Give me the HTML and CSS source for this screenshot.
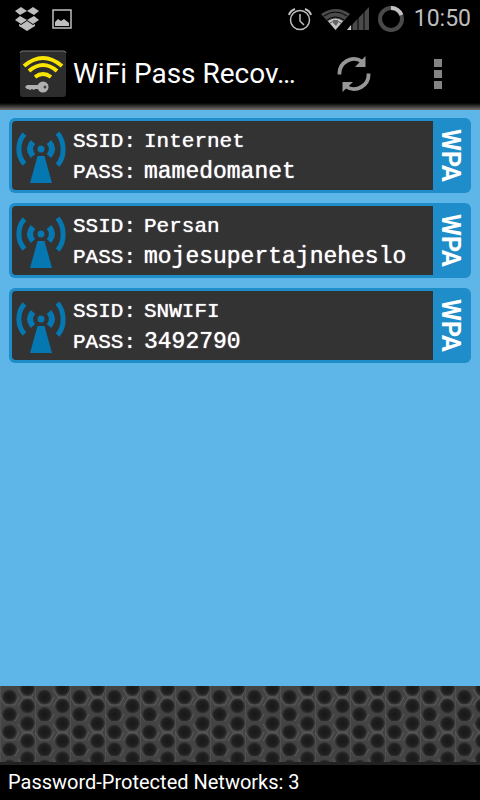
FILE: index.html
```html
<!DOCTYPE html>
<html lang="en">
<head>
<meta charset="utf-8">
<meta name="viewport" content="width=device-width, initial-scale=1">
<title>WiFi Pass Recovery</title>
<link rel="stylesheet" href="styles.css">
</head>
<body>
<svg class="defs" width="0" height="0" aria-hidden="true">
  <symbol id="antenna" viewBox="0 0 50 54">
    <circle cx="25" cy="19" r="3.500" fill="#0577b1"/>
    <path d="M21.500 26h7L36 53H14z" fill="#0577b1"/>
    <g fill="none" stroke="#0577b1">
      <path d="M17 12Q11 19 17 26M33 12Q39 19 33 26" stroke-width="6"/>
      <path d="M8.500 4C1 12 1 26 8.500 34M41.500 3C49 12 49 27 41.500 35" stroke-width="5"/>
    </g>
  </symbol>
</svg>

<div class="status">
  <svg width="26" height="24" viewBox="0 0 26 24" fill="#bebebe" aria-hidden="true">
    <path d="M7 0l6 4-7 4-5-4zM19 0l6 4-5 4-7-4zM6 9l7 4-6 4-6-4zM20 9l5 4-6 4-6-4zM13 14l6 4 2-1v2l-8 5-8-5v-2l2 1z"/>
  </svg>
  <svg width="20" height="20" viewBox="0 0 20 20" aria-hidden="true">
    <rect x="1" y="1" width="18" height="18" fill="none" stroke="#bebebe" stroke-width="1.500"/>
    <path d="M3 17v-4l3-3 3 2 3-2 5 4v3z" fill="#bebebe"/>
  </svg>
  <span class="spacer"></span>
  <svg width="24" height="24" viewBox="0 0 24 24" fill="none" stroke="#bebebe" aria-hidden="true">
    <circle cx="12" cy="13" r="9.500" stroke-width="1.500"/>
    <path d="M12 7v7l4 4" stroke-width="1.500"/>
    <path d="M1 8Q2 4 7 2M23 8Q22 4 17 2" stroke-width="2"/>
  </svg>
  <svg class="signal" width="49" height="24" viewBox="0 0 49 24" aria-hidden="true">
    <path d="M0 7Q15-3 29 7L14.500 23z" fill="#4a4a4a"/>
    <path d="M7 14Q14.500 9 22 14L14.500 23z" fill="#c4c4c4"/>
    <g fill="none" stroke="#000"><path d="M3 9Q14.500 1 26 9M6 13Q14.500 7 23 13"/><path d="M9 16Q14.500 12 20 16" stroke="#555"/></g>
    <path d="M12 13h5v3l-2 3-3-3z" fill="#666"/>
    <path d="M26 23L48 0v23z" fill="#4a4a4a"/>
    <path d="M26 23l4-5v5z" fill="#c4c4c4"/>
    <path d="M31 10v13M37 8v15M43 2v21" stroke="#000"/>
  </svg>
  <svg class="battery" width="26" height="26" viewBox="0 0 26 26" fill="none" stroke-width="4" aria-hidden="true">
    <circle cx="13" cy="13" r="11" stroke="#4a4a4a"/>
    <path d="M13 2A11 11 0 0 1 23.500 9" stroke="#c4c4c4"/>
  </svg>
  <time>10:50</time>
</div>

<header class="bar">
  <svg width="48" height="48" viewBox="0 0 48 48" aria-hidden="true">
    <rect x="1" y="1" width="46" height="46" rx="3" fill="#2d2d2d"/>
    <path d="M1 3q0-2 3-2h40q3 0 3 2" fill="none" stroke="#777" stroke-width="1"/>
    <g fill="none" stroke="#f8e500" stroke-width="4">
      <path d="M5 16Q24 0 43 16M10 21Q24 9 38 21M16 27Q24 21 32 27"/>
    </g>
    <circle cx="24" cy="37" r="5.500" fill="#b0b0b0"/><circle cx="26" cy="37" r="1.500" fill="#444"/>
    <path d="M19 35v4h-3l-1 1-2-1-2 1-2-1H8l-2-2 2-2z" fill="#b0b0b0"/>
  </svg>
  <h1>WiFi Pass Recov…</h1>
  <button type="button" class="refresh" aria-label="Refresh">
    <svg width="34" height="36" viewBox="0 0 34 36" aria-hidden="true">
      <g fill="none" stroke="#969696" stroke-width="3.800">
        <path d="M2.500 18.500A14.500 14.500 0 0 1 25 5.500M31.500 17.500A14.500 14.500 0 0 1 9 30.500"/>
      </g>
      <path d="M28.500 0v11H18zM5.500 36V26H16z" fill="#969696"/>
    </svg>
  </button>
  <button type="button" class="more" aria-label="More options">
    <svg width="8" height="30" viewBox="0 0 8 30" fill="#848484" aria-hidden="true"><path d="M0 0h8v8H0zM0 11h8v8H0zM0 22h8v8H0z"/></svg>
  </button>
</header>

<main>
  <ul class="networks">
    <li class="card">
      <div class="info">
        <svg class="antenna" width="50" height="54" aria-hidden="true"><use href="#antenna"/></svg>
        <dl>
          <dt>SSID:</dt><dd>Internet</dd>
          <dt>PASS:</dt><dd class="pass">mamedomanet</dd>
        </dl>
      </div>
      <span class="type">WPA</span>
    </li>
    <li class="card">
      <div class="info">
        <svg class="antenna" width="50" height="54" aria-hidden="true"><use href="#antenna"/></svg>
        <dl>
          <dt>SSID:</dt><dd>Persan</dd>
          <dt>PASS:</dt><dd class="pass">mojesupertajneheslo</dd>
        </dl>
      </div>
      <span class="type">WPA</span>
    </li>
    <li class="card">
      <div class="info">
        <svg class="antenna" width="50" height="54" aria-hidden="true"><use href="#antenna"/></svg>
        <dl>
          <dt>SSID:</dt><dd>SNWIFI</dd>
          <dt>PASS:</dt><dd class="pass">3492790</dd>
        </dl>
      </div>
      <span class="type">WPA</span>
    </li>
  </ul>
</main>

<svg class="mesh" width="100%" height="76" aria-hidden="true">
  <defs>
    <radialGradient id="hole"><stop offset="0" stop-color="#181818"/><stop offset=".7" stop-color="#202020"/><stop offset="1" stop-color="#383838"/></radialGradient>
    <pattern id="grid" width="35" height="35" patternUnits="userSpaceOnUse">
      <rect width="35" height="35" fill="#434343"/>
      <path d="M0 0v35M19 11l-4 8H5l-5-8M18 20l5-8h9l3 8M19 28l-4 7H5l-5-7M18 3l5 8h9l3-8" fill="none" stroke="#5a5a5a" stroke-width="1"/>
      <g fill="url(#hole)">
        <circle cx="9.500" cy="11" r="7.500"/><circle cx="9.500" cy="28.500" r="7.500"/>
        <circle cx="27.500" cy="2.500" r="7.500"/><circle cx="27.500" cy="20" r="7.500"/><circle cx="27.500" cy="37.500" r="7.500"/>
      </g>
    </pattern>
  </defs>
  <rect width="100%" height="76" fill="url(#grid)"/>
</svg>
<footer>Password-Protected Networks: 3</footer>
</body>
</html>
```

FILE: styles.css
```css
* { box-sizing: border-box; }

body {
  margin: 0;
  min-height: 100vh;
  display: flex;
  flex-direction: column;
  background: #5db6e7;
  color: #fff;
  font-family: Roboto, sans-serif;
}

.defs { position: absolute; }
svg { display: block; flex: none; }

.status {
  display: flex;
  align-items: center;
  height: 38px;
  padding: 0 9px 0 14px;
  gap: 12px;
  background: #000;
  color: #bebebe;
}
.spacer { flex: 1; }
.signal { margin-left: -3px; }
.battery { margin-left: -4px; }
time { font-size: 23px; line-height: 28px; margin-left: -2px; }

.bar {
  display: flex;
  align-items: center;
  height: 72px;
  padding: 0 38px 0 19px;
  background: linear-gradient(#000 65px, #787070 72px);
}
h1 {
  flex: 1;
  margin: 0 0 0 6px;
  font-size: 28px;
  font-weight: 400;
  line-height: 32px;
  white-space: nowrap;
}
button {
  display: flex;
  padding: 0;
  border: 0;
  background: none;
}
.refresh { margin-right: 63px; }

main { flex: 1; padding: 8px 9px; }
.networks {
  display: grid;
  gap: 10px;
  margin: 0;
  padding: 0;
  list-style: none;
}
.card {
  display: flex;
  padding: 3px;
  border-radius: 6px;
  background: #1f8dc9;
}
.info {
  flex: 1;
  display: flex;
  align-items: center;
  gap: 7px;
  padding: 5px 4px 2px;
  border-radius: 4px 0 0 4px;
  background: #333;
}
dl {
  display: grid;
  grid-template-columns: 71px 1fr;
  margin: 0;
  font-family: "Liberation Mono", monospace;
  font-size: 21px;
  line-height: 31px;
  text-shadow: 0 0 1px #fff;
}
dd { margin: 0; }
.pass { font-size: 23px; }
.type {
  width: 35px;
  line-height: 35px;
  writing-mode: vertical-rl;
  text-align: center;
  font-size: 25px;
  font-weight: 700;
}

footer {
  height: 38px;
  padding: 0 8px;
  border-top: 3px solid #222;
  background: #000;
  font-size: 20px;
  line-height: 35px;
}
```
